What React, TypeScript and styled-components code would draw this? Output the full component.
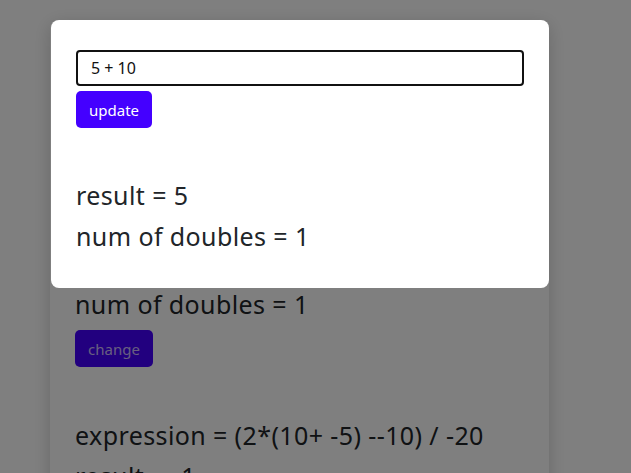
import React from 'react'
import styled, { createGlobalStyle } from 'styled-components'

const GlobalStyle = createGlobalStyle`
  html, body {
    margin: 0;
    padding: 0;
    background: #ffffff;
    color: #212529;
    font-family: 'Noto Sans', 'Open Sans', 'DejaVu Sans', sans-serif;
  }
  * {
    box-sizing: border-box;
  }
`

const Page = styled.main`
  padding: 20px 0 0 50px;
  height: 473px;
  overflow: hidden;
`

const Card = styled.section`
  width: 499px;
  background: #ffffff;
  border-radius: 8px;
  box-shadow: 0 4px 18px rgba(0, 0, 0, 0.18);
  padding: 30px 25px 30px 25px;
`

const Form = styled.form`
  display: flex;
  flex-direction: column;
  align-items: flex-start;
  gap: 5px;
`

const ExpressionInput = styled.input`
  width: 100%;
  height: 36px;
  border: 2px solid #111111;
  border-radius: 4px;
  padding: 0 13px;
  font-family: inherit;
  font-size: 16px;
  color: #111111;
  outline: none;
`

const Button = styled.button`
  height: 37px;
  padding: 0 13px;
  border: none;
  border-radius: 5px;
  background: #4400ff;
  color: #ffffff;
  font-family: inherit;
  font-size: 15px;
  cursor: pointer;
`

const Item = styled.div<{ $first?: boolean }>`
  margin-top: ${({ $first }) => ($first ? '74px' : '48px')};
`

const Line = styled.div`
  font-size: 25px;
  letter-spacing: 0.4px;
  line-height: 41px;
  white-space: nowrap;
`

const ChangeButton = styled(Button)`
  margin-top: 5px;
  color: rgba(255, 255, 255, 0.75);
`

const Overlay = styled.div`
  position: fixed;
  inset: 0;
  background: rgba(0, 0, 0, 0.5);
  display: flex;
  align-items: flex-start;
  padding: 20px 0 0 51px;
`

const Modal = styled.div`
  width: 498px;
  background: #ffffff;
  border-radius: 8px;
  padding: 30px 25px 31px 25px;
`

const Result = styled.div`
  margin-top: 47px;
`

const items = [
  { expression: '5 + 10', result: '15', doubles: 1 },
  { expression: '(2*(10+ -5) --10) / -20', result: '-1', doubles: 1 },
]

export default function App() {
  return (
    <>
      <GlobalStyle />
      <Page>
        <Card>
          <Form onSubmit={(e) => e.preventDefault()}>
            <ExpressionInput defaultValue="" placeholder="expression" />
            <Button type="submit">add</Button>
          </Form>
          {items.map((item, index) => (
            <Item key={index} $first={index === 0}>
              <Line>expression = {item.expression}</Line>
              <Line>result = {item.result}</Line>
              <Line>num of doubles = {item.doubles}</Line>
              <ChangeButton type="button">change</ChangeButton>
            </Item>
          ))}
        </Card>
      </Page>
      <Overlay>
        <Modal>
          <Form onSubmit={(e) => e.preventDefault()}>
            <ExpressionInput defaultValue="5 + 10" />
            <Button type="submit">update</Button>
          </Form>
          <Result>
            <Line>result = 5</Line>
            <Line>num of doubles = 1</Line>
          </Result>
        </Modal>
      </Overlay>
    </>
  )
}
